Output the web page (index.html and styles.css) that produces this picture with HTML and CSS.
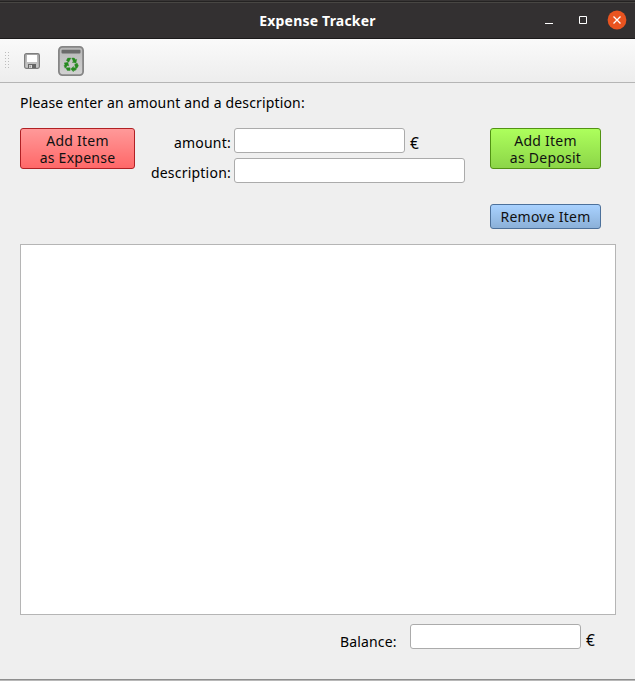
FILE: index.html
```html
<!DOCTYPE html>
<html lang="en">
<head>
<meta charset="utf-8">
<title>Expense Tracker</title>
<link rel="stylesheet" href="styles.css">
</head>
<body>
<div class="window">
  <header class="titlebar">
    <h1 class="title">Expense Tracker</h1>
    <div class="controls">
      <svg width="8" height="8" viewBox="0 0 8 8"><path d="M0 7.5h8" stroke="#fff"/></svg>
      <svg width="8" height="8" viewBox="0 0 8 8"><path d="M.5.5h7v7h-7z" fill="none" stroke="#fff"/></svg>
      <svg width="20" height="20" viewBox="0 0 20 20"><circle cx="10" cy="10" r="9.4" fill="#e95420"/><path d="M6.5 6.5l7 7M13.5 6.5l-7 7" stroke="#fff" stroke-width="1.3"/></svg>
    </div>
  </header>
  <nav class="toolbar">
    <span class="grip"></span>
    <svg class="save" width="16" height="16" viewBox="0 0 16 16">
      <defs><linearGradient id="metal" x2="0" y2="1"><stop stop-color="#b0b0b0"/><stop offset="1" stop-color="#c9c9c9"/></linearGradient></defs>
      <rect x=".6" y=".6" width="14.8" height="14.8" rx="1.8" fill="url(#metal)" stroke="#7d7d7d" stroke-width="1.2"/>
      <path d="M3 2h10v7H3z" fill="#fff"/>
      <path d="M4 11h8v4H4z" fill="#666"/><path d="M5 12h3v3H5z" fill="#ddd"/><path d="M5.5 12.5h1.5v2H5.5z" fill="#999"/>
    </svg>
    <svg class="recycle" width="26" height="30" viewBox="0 0 26 30">
      <defs><linearGradient id="bin" x2="0" y2="1"><stop stop-color="#b6b6b6"/><stop offset="1" stop-color="#d2d2d2"/></linearGradient></defs>
      <rect x=".9" y=".9" width="24.2" height="28.2" rx="3.5" fill="url(#bin)" stroke="#868686" stroke-width="1.8"/>
      <rect x="3.5" y="3.8" width="19" height="3.6" rx="1" fill="#6b6b6b"/>
      <g fill="#278a20" stroke="#278a20" stroke-width=".4">
        <path d="M8.4 14.4l1.3-2.3h3.2l-2.2 4.1z"/>
        <path d="M13.8 12h2.5l1.2 1.8 1.2-.5-.7 3.8-3.8-.8 1.2-.7z"/>
        <path d="M16.6 18.6l2.5-1.5 1.3 2.6-1.4 2.5h-1.3z"/>
        <path d="M18.5 22.9l-1.3 1.5h-1.8v1.4l-2.6-2.8 2.6-2.6v1.4h1.8z"/>
        <path d="M12.1 21.7v2.8H9.3l-1.5-2.8z"/>
        <path d="M7.1 22.2l-1-2.5 1-1.8-1.1-.8 3.8-.8 1 3.6-1.3-.5z"/>
      </g>
    </svg>
  </nav>
  <main class="content">
    <p class="prompt">Please enter an amount and a description:</p>
    <section class="entry">
      <button class="btn expense">Add Item<br>as Expense</button>
      <div class="fields">
        <label class="field"><span class="caption">amount:</span><input class="short" type="text"><span class="euro">€</span></label>
        <label class="field"><span class="caption">description:</span><input class="long" type="text"></label>
      </div>
      <button class="btn deposit">Add Item<br>as Deposit</button>
    </section>
    <div class="remove-row"><button class="btn remove">Remove Item</button></div>
    <div class="list"></div>
    <footer class="balance">
      <label for="balance" class="balance-label">Balance:</label>
      <input id="balance" class="short" type="text"><span class="euro">€</span>
    </footer>
  </main>
</div>
</body>
</html>
```

FILE: styles.css
```css
* { box-sizing: border-box; }
body { margin: 0; background: #383535; font: 14px/17px "Noto Sans", sans-serif; letter-spacing: .16px; color: #000; }
.window { height: 681px; display: flex; flex-direction: column; border-bottom: 1px solid #b8b8b8; }
.titlebar { height: 39px; padding: 4px 8px 0 0; display: grid; grid-template-columns: 1fr auto 1fr; background: linear-gradient(#383535 0 1px, #242222 1px 2px, #484643 2px 3px, #333031 3px 38px, #1c1a1b 38px); }
.title { grid-column: 2; margin: 0 0 0 8px; font-size: 14px; line-height: 33px; font-weight: 700; letter-spacing: .2px; color: #fff; white-space: nowrap; }
.controls { grid-column: 3; display: flex; justify-content: flex-end; align-items: flex-start; padding-top: 12px; gap: 26px; }
.controls svg:last-child { margin: -6px 0 0 -6px; }
.toolbar { height: 44px; display: flex; align-items: center; padding-left: 5px; background: linear-gradient(#fafafa, #ededed); border-bottom: 1px solid #b5b5b5; }
.grip { width: 7px; height: 17px; background: radial-gradient(circle at .5px .5px, #bdbdbd .6px, transparent .8px) 0 0 / 3px 3px; }
.grip { width: 4px; }
.save { margin-left: 15px; }
.recycle { margin-left: 18px; }
.content { flex: 1; display: flex; flex-direction: column; padding: 11px 19px 0 20px; background: #efefef; border-bottom: 1px solid #8e8e8e; }
.prompt { margin: 0 0 17px; }
.entry { display: flex; align-items: flex-start; height: 41px; }
.btn { padding: 0; font: inherit; letter-spacing: .25px; text-align: center; color: #111; border: 1px solid; border-radius: 3px; white-space: nowrap; }
.expense { width: 115px; height: 41px; background: linear-gradient(#ff9999, #ff6868); border-color: #b02024; }
.deposit { width: 111px; height: 41px; margin-left: 25px; background: linear-gradient(#adff5c, #8cd548); border-color: #529313; }
.remove { width: 111px; height: 25px; background: linear-gradient(#a9d2ff, #8bb0d8); border-color: #4d719b; }
.fields { width: 330px; display: flex; flex-direction: column; gap: 5px; }
.field { display: flex; align-items: center; height: 25px; }
.caption { width: 96px; margin-right: 3px; padding-top: 3px; letter-spacing: .22px; text-align: right; white-space: nowrap; }
input { height: 25px; border: 1px solid #ababab; border-radius: 3px; background: #fff; padding: 0 4px; font: inherit; }
.short { width: 171px; }
.long { width: 231px; }
.euro { margin-left: 5px; padding-top: 5px; font-size: 15.5px; }
.remove-row { display: flex; justify-content: flex-end; padding: 35px 15px 0 0; }
.list { height: 371px; margin-top: 15px; background: #fff; border: 1px solid #b5b5b5; }
.balance { display: flex; align-items: center; height: 25px; margin-top: 9px; padding-left: 320px; }
.balance-label { width: 70px; padding-top: 9px; }
.balance .euro { padding-top: 7px; }
```
